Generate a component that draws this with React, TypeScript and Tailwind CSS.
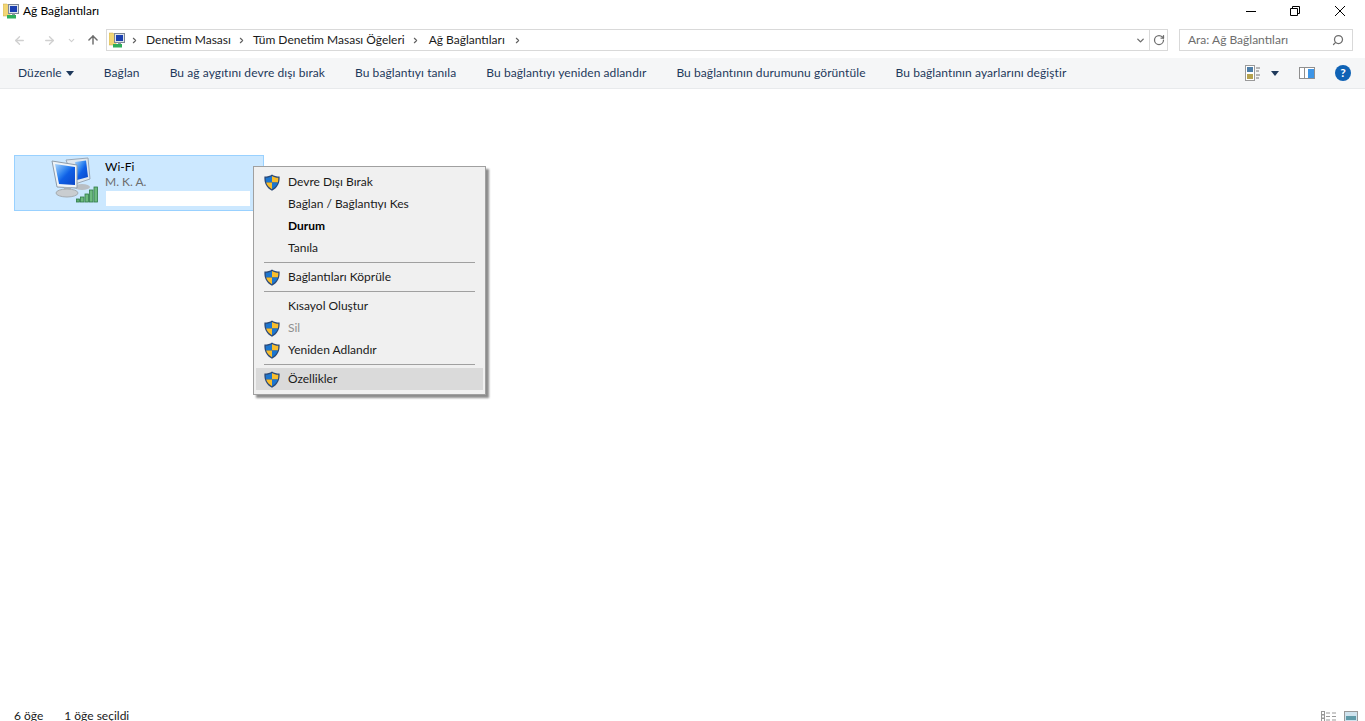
import { ArrowLeft, ArrowRight, ArrowUp, ChevronDown, ChevronRight, RotateCw, Search } from "lucide-react";

const font = "font-['Lato','Noto_Sans',sans-serif]";

function NetFolderIcon({ className = "" }: { className?: string }) {
    return (
        <svg viewBox="0 0 16 16" className={className}>
            <path d="M0 1h4l1 1h2v11H0z" fill="#f2d675" stroke="#c9a94a" strokeWidth="0.5" />
            <rect x="5.500" y="1.500" width="10" height="9" fill="#dfe5ec" stroke="#7d8796" />
            <rect x="7" y="3" width="7" height="6" fill="#1a3fb0" />
            <rect x="9" y="10" width="3" height="2" fill="#8a93a0" />
            <rect x="4" y="12" width="9" height="3.500" fill="#2fae5a" />
        </svg>
    );
}

function Shield() {
    return (
        <svg viewBox="0 0 16 17" className="h-[17px] w-4 shrink-0">
            <path d="M8 .4 C10 1.900 12.500 2.500 15.600 2.500 C16 8.600 13.800 13.800 8 16.800 C2.200 13.800 0 8.600 .4 2.500 C3.500 2.500 6 1.900 8 .4Z" fill="#2c4a78" />
            <path d="M8 1.900 C6.200 3 4.200 3.600 1.700 3.700 C1.700 5.600 1.800 7.200 2.200 8.600 H8Z" fill="#1d76cf" />
            <path d="M8 1.900 C9.800 3 11.800 3.600 14.300 3.700 C14.300 5.600 14.200 7.200 13.800 8.600 H8Z" fill="#f8bd2c" />
            <path d="M8 8.600 H2.200 C3 11.400 5 13.800 8 15.200Z" fill="#f8bd2c" />
            <path d="M8 8.600 H13.800 C13 11.400 11 13.800 8 15.200Z" fill="#1d76cf" />
        </svg>
    );
}

function WifiComputerIcon() {
    return (
        <svg viewBox="0 0 48 48" className="h-12 w-12">
            <defs>
                <linearGradient id="scr" x1="0" y1="0" x2="1" y2="1">
                    <stop offset="0" stopColor="#a8d4fb" />
                    <stop offset="0.4" stopColor="#2f83f0" />
                    <stop offset="0.55" stopColor="#0f5fe6" />
                    <stop offset="1" stopColor="#0a46c8" />
                </linearGradient>
            </defs>
            <path d="M15 3 37 1 39 22 24 27Z" fill="#dfe7ef" stroke="#9aa7b5" />
            <path d="M24 5 35 3.500 37 20 26 23Z" fill="url(#scr)" />
            <ellipse cx="31" cy="30" rx="8" ry="3" fill="#b9bfc4" />
            <path d="M1 4 26 8 26 31 6 30Z" fill="#eef3f7" stroke="#8f9dab" />
            <path d="M4 7 24 10 24 28 8 27Z" fill="url(#scr)" />
            <path d="M13 30h7v5h-7z" fill="#aab2b9" />
            <ellipse cx="16" cy="36" rx="11" ry="4" fill="#c9cdd0" stroke="#a5abb0" />
            <rect x="25.500" y="42" width="3" height="3" fill="#5fae72" stroke="#2f7a48" strokeWidth="0.8" />
            <rect x="29.500" y="40" width="3.500" height="5" fill="#6dba7f" stroke="#2f7a48" strokeWidth="0.8" />
            <rect x="34" y="37" width="3.500" height="8" fill="#6dba7f" stroke="#2f7a48" strokeWidth="0.8" />
            <rect x="38.500" y="33" width="3.500" height="12" fill="#6dba7f" stroke="#2f7a48" strokeWidth="0.8" />
            <rect x="43" y="30" width="3.500" height="15" fill="#6dba7f" stroke="#2f7a48" strokeWidth="0.8" />
        </svg>
    );
}

function Caret() {
    return <div className="h-0 w-0 border-x-[4.5px] border-t-[5px] border-x-transparent border-t-[#1e395b]" />;
}

const tools = [
    "Bağlan",
    "Bu ağ aygıtını devre dışı bırak",
    "Bu bağlantıyı tanıla",
    "Bu bağlantıyı yeniden adlandır",
    "Bu bağlantının durumunu görüntüle",
    "Bu bağlantının ayarlarını değiştir",
];

function MenuRow({ label, shield, bold, disabled, active }: { label: string; shield?: boolean; bold?: boolean; disabled?: boolean; active?: boolean }) {
    return (
        <div className={`mx-[2px] flex h-[22px] items-center ${active ? "bg-[#dadada]" : ""}`}>
            <div className="ml-2 w-4">{shield && <Shield />}</div>
            <span className={`ml-2 ${bold ? "font-bold text-black" : disabled ? "text-[#8f8f8f]" : "text-[#1a1a1a]"}`}>{label}</span>
        </div>
    );
}

function MenuSep() {
    return <div className="mx-[10px] my-[3px] h-px bg-[#a0a0a0]" />;
}

export default function App() {
    return (
        <div className={`relative flex h-[721px] w-[1365px] flex-col overflow-hidden bg-white ${font} text-[12px]`}>
            {/* Title */}
            <div className="flex h-[22px] items-center pl-[3px]">
                <NetFolderIcon className="h-4 w-4" />
                <span className="ml-1 text-black">Ağ Bağlantıları</span>
                <div className="ml-auto flex items-center">
                    <div className="mr-[34px] h-px w-[10px] bg-black" />
                    <svg viewBox="0 0 10 10" className="mr-[35px] h-[10px] w-[10px]" fill="none" stroke="#000">
                        <path d="M.5 2.500h7v7h-7z M2.500 2.500v-2h7v7h-2" />
                    </svg>
                    <svg viewBox="0 0 10 10" className="mr-[20px] h-[10px] w-[10px]" stroke="#000">
                        <path d="M0 0l10 10M10 0L0 10" />
                    </svg>
                </div>
            </div>
            {/* Address row */}
            <div className="mt-[7px] flex h-[22px] items-center">
                <ArrowLeft className="ml-[13px] h-[13px] w-[13px] text-[#d0d0d0]" strokeWidth={2.5} />
                <ArrowRight className="ml-[17px] h-[13px] w-[13px] text-[#d0d0d0]" strokeWidth={2.5} />
                <ChevronDown className="ml-[11px] h-[9px] w-[9px] text-[#d0d0d0]" strokeWidth={3} />
                <ArrowUp className="ml-[10px] h-[14px] w-[14px] text-[#6d6d6d]" strokeWidth={2.5} />
                <div className="ml-[6px] flex h-[22px] w-[1062px] items-center border border-[#d9d9d9] pl-[2px]">
                    <NetFolderIcon className="h-4 w-4" />
                    <ChevronRight className="ml-[5px] h-[9px] w-[9px] text-[#5f5f5f]" strokeWidth={3} />
                    <span className="ml-[7px] text-[#1a1a1a]">Denetim Masası</span>
                    <ChevronRight className="ml-[6px] h-[9px] w-[9px] text-[#5f5f5f]" strokeWidth={3} />
                    <span className="ml-[7px] text-[#1a1a1a]">Tüm Denetim Masası Öğeleri</span>
                    <ChevronRight className="ml-[6px] h-[9px] w-[9px] text-[#5f5f5f]" strokeWidth={3} />
                    <span className="ml-[9px] text-[#1a1a1a]">Ağ Bağlantıları</span>
                    <ChevronRight className="ml-[8px] h-[9px] w-[9px] text-[#5f5f5f]" strokeWidth={3} />
                    <ChevronDown className="ml-auto mr-[2px] h-[11px] w-[11px] text-[#6d6d6d]" strokeWidth={3} />
                    <div className="ml-[1px] flex h-full w-[18px] items-center justify-center border-l border-[#d9d9d9]">
                        <RotateCw className="h-[12px] w-[12px] text-[#6d6d6d]" strokeWidth={2.5} />
                    </div>
                </div>
                <div className="ml-[11px] flex h-[22px] w-[174px] items-center border border-[#d9d9d9] pl-2 pr-[8px]">
                    <span className="text-[#6d6d6d]">Ara: Ağ Bağlantıları</span>
                    <Search className="ml-auto h-[12px] w-[12px] -scale-x-100 text-[#6d6d6d]" strokeWidth={2.5} />
                </div>
            </div>
            {/* Toolbar */}
            <div className="mt-[7px] flex h-[31px] items-center gap-[30px] border-b border-[#e8eaec] bg-[#f5f6f7] pl-[18px] tracking-[0.08px] text-[#1e395b]">
                <div className="flex items-center gap-[4px]">
                    <span>Düzenle</span>
                    <Caret />
                </div>
                {tools.map((t) => (
                    <span key={t}>{t}</span>
                ))}
                <div className="ml-auto flex items-center">
                    <svg viewBox="0 0 16 16" className="h-4 w-4">
                        <rect x=".5" y=".5" width="9" height="15" fill="#fff" stroke="#9a9a9a" />
                        <rect x="2" y="2" width="6" height="5" fill="#4d7ea8" />
                        <rect x="2" y="9" width="6" height="5" fill="#b5a24e" />
                        <path d="M11 3h4M11 6h3M11 10h4M11 13h3" stroke="#777" />
                    </svg>
                    <div className="ml-[10px]"><Caret /></div>
                    <svg viewBox="0 0 16 12" className="ml-[20px] h-3 w-4">
                        <rect x=".5" y=".5" width="15" height="11" fill="#fff" stroke="#8f8f8f" />
                        <path d="M5.500 0v12" stroke="#8f8f8f" />
                        <rect x="9" y="2" width="6" height="9" fill="#3d95e6" />
                    </svg>
                    <div className="ml-[20px] mr-[14px] flex h-4 w-4 items-center justify-center rounded-full bg-[#0f62b5] text-[12px] leading-none font-bold text-white">?</div>
                </div>
            </div>
            {/* Content */}
            <div className="flex-1 pl-[14px] pt-[66px]">
                <div className="flex h-[56px] w-[250px] border border-[#99d1ff] bg-[#cce8ff]">
                    <div className="ml-[36px] mt-[1px] h-12 w-12"><WifiComputerIcon /></div>
                    <div className="ml-[6px] flex flex-col pt-[3px] leading-[15px]">
                        <span className="text-black">Wi-Fi</span>
                        <span className="text-[#6d6d6d]">M. K. A.</span>
                        <div className="ml-px mt-[2px] h-[15px] w-[144px] bg-white" />
                    </div>
                </div>
            </div>
            {/* Status */}
            <div className="-mb-[7px] flex h-[24px] items-center pl-[14px] text-[#1a1a1a]">
                <span>6 öğe</span>
                <span className="ml-[21px]">1 öğe seçildi</span>
                <div className="ml-auto mr-[7px] flex items-center gap-[7px]">
                    <svg viewBox="0 0 16 11" className="h-[11px] w-4" fill="none" stroke="#999">
                        <rect x=".5" y=".5" width="3" height="3" />
                        <rect x=".5" y="4" width="3" height="3" />
                        <rect x=".5" y="7.500" width="3" height="3" />
                        <path d="M5 2h4M11 2h4M5 5.500h4M11 5.500h4M5 9h4M11 9h4" />
                    </svg>
                    <svg viewBox="0 0 14 11" className="h-[11px] w-[14px]">
                        <rect x=".5" y=".5" width="13" height="10" fill="#cfe3ee" stroke="#999" />
                        <rect x="2" y="5" width="10" height="4" fill="#5f9aa8" />
                    </svg>
                </div>
            </div>
            {/* Context menu */}
            <div className="absolute left-[253px] top-[166px] w-[233px] border border-[#a0a0a0] bg-[#f0f0f0] py-[4px] shadow-[3px_3px_2px_rgba(0,0,0,0.45)]">
                <MenuRow label="Devre Dışı Bırak" shield />
                <MenuRow label="Bağlan / Bağlantıyı Kes" />
                <MenuRow label="Durum" bold />
                <MenuRow label="Tanıla" />
                <MenuSep />
                <MenuRow label="Bağlantıları Köprüle" shield />
                <MenuSep />
                <MenuRow label="Kısayol Oluştur" />
                <MenuRow label="Sil" shield disabled />
                <MenuRow label="Yeniden Adlandır" shield />
                <MenuSep />
                <MenuRow label="Özellikler" shield active />
            </div>
        </div>
    );
}
